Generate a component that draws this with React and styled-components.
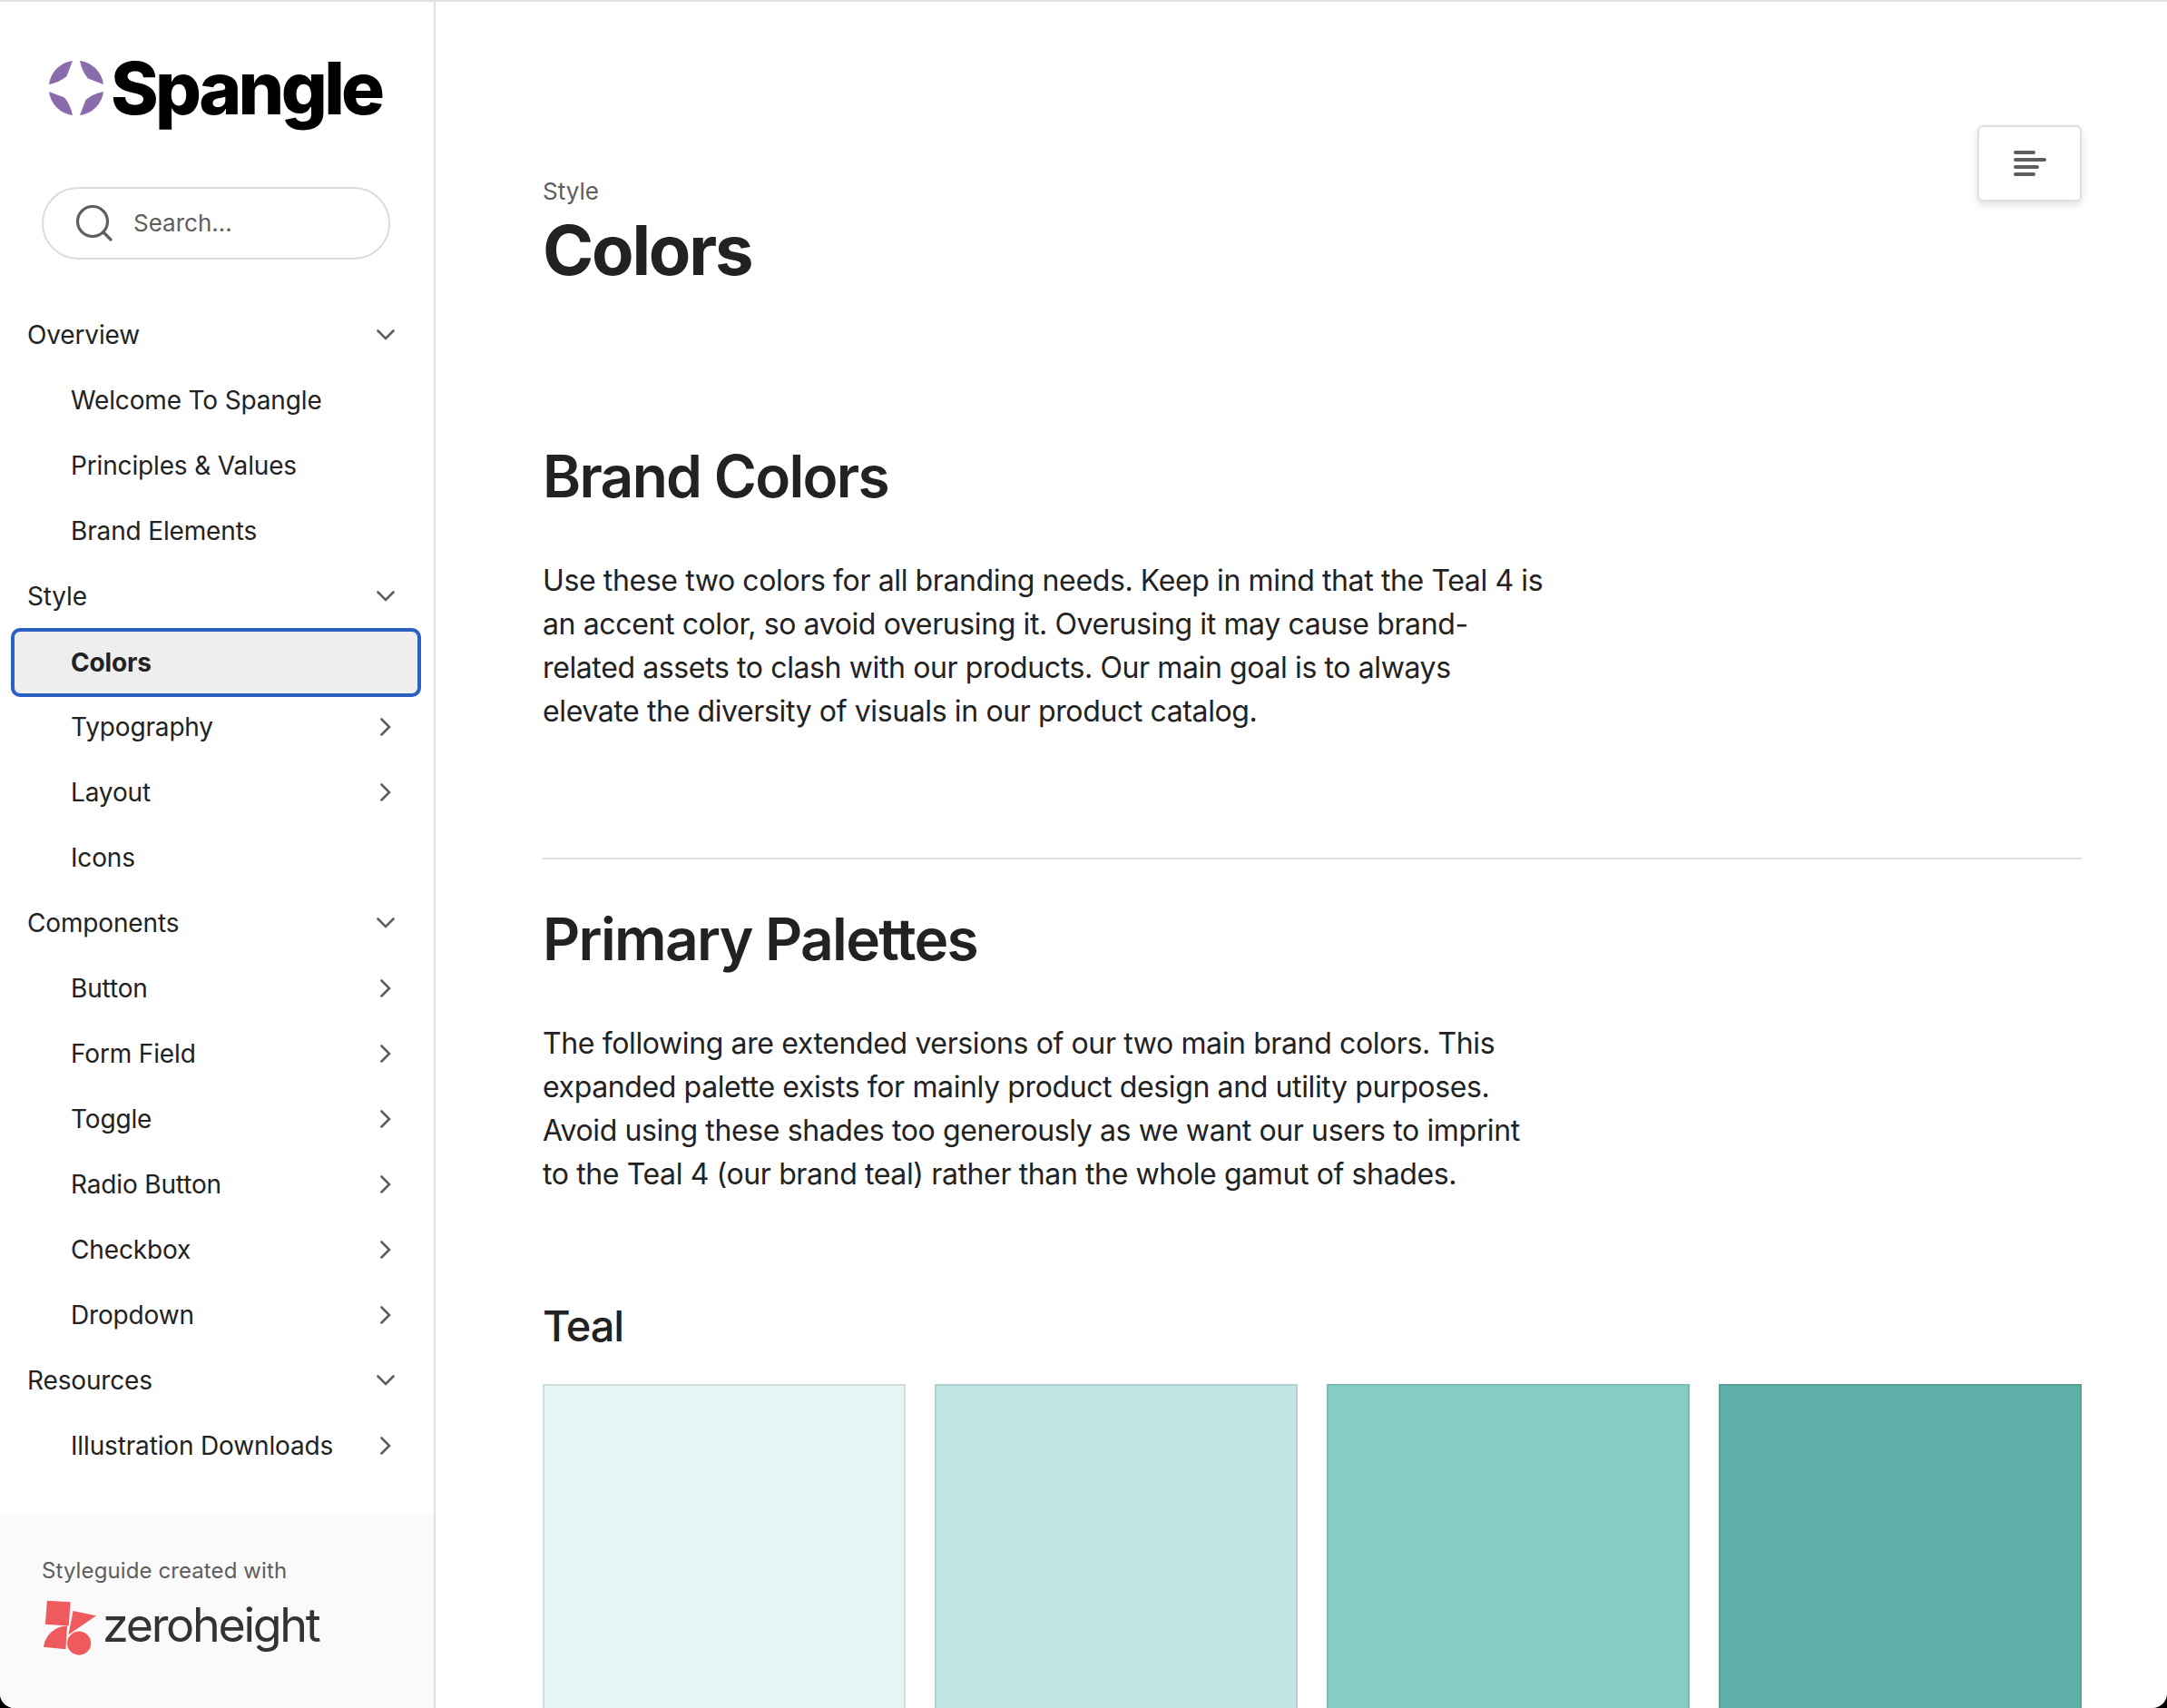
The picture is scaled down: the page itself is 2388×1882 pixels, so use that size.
import React from 'react';
import styled, { createGlobalStyle } from 'styled-components';

const Global = createGlobalStyle`
  html, body { margin: 0; padding: 0; background: #000; }
  body { font-family: Inter, "Liberation Sans", sans-serif; color: #222; overflow: hidden; }
  * { box-sizing: border-box; }
`;

const Page = styled.div`
  width: 2388px; height: 1882px; display: flex; overflow: hidden;
  background: #fff; border-top: 2px solid #e0e0e0; border-radius: 0 0 16px 16px;
`;
const Sidebar = styled.aside`
  width: 480px; flex: none; height: 100%; display: flex; flex-direction: column;
  border-right: 2px solid #e0e0e0;
`;
const Brand = styled.div`
  height: 204px; padding: 65px 0 0 54px; display: flex; align-items: flex-start; gap: 8px;
`;
const BrandName = styled.span`
  font-family: "Inter", sans-serif; font-weight: 800; font-size: 80px; line-height: 60px;
  letter-spacing: -3.7px; color: #000;
`;
const Search = styled.div`
  width: 384px; height: 80px; margin-left: 46px; border: 2px solid #dcdcdc; border-radius: 40px;
  display: flex; align-items: center; padding-left: 35px; gap: 22px;
  font-size: 26px; color: #5e5e5e;
`;
const SearchText = styled.span`
  margin-bottom: 2px;
`;
const Nav = styled.nav`
  margin-top: 47px; display: flex; flex-direction: column;
`;
const Row = styled.div`
  height: ${p => p.$active ? '68px' : '72px'}; flex: none; display: flex; align-items: center; justify-content: space-between;
  margin: ${p => p.$active ? '3px 18px 1px 16px' : '0 18px 0 16px'};
  padding: 0 ${p => p.$chev === 'down' ? '25px' : '29px'} 0 ${p => p.$sub ? '62px' : '14px'};
  font-size: 28px; letter-spacing: -0.15px; color: #222;
  font-weight: ${p => p.$active ? 700 : 400};
  background: ${p => p.$active ? '#eeeeee' : 'transparent'};
  border-radius: ${p => p.$active ? '6px' : '0'};
  outline: ${p => p.$active ? '4px solid #2a5fc4' : 'none'};
`;
const Footer = styled.div`
  margin-top: auto; height: 215px; background: #fafafa; padding: 48px 0 0 46px;
  display: flex; flex-direction: column;
`;
const FooterNote = styled.div`
  font-size: 24px; line-height: 32px; color: #5e5e5e; letter-spacing: 0.1px;
`;
const ZeroBrand = styled.div`
  display: flex; align-items: flex-start; margin: 15px 0 0 1px; gap: 6px;
`;
const ZeroName = styled.span`
  font-size: 52px; line-height: 58px; color: #333; letter-spacing: -2.3px; font-weight: 400;
`;
const Main = styled.main`
  position: relative; flex: 1; padding: 0 94px 0 118px; min-width: 0;
`;
const TocButton = styled.button`
  position: absolute; top: 136px; right: 94px; width: 115px; height: 84px;
  background: #fff; border: 2px solid #e0e0e0; border-radius: 6px; padding: 0;
  box-shadow: 0 4px 10px rgba(0,0,0,.12);
  display: flex; align-items: center; justify-content: center;
`;
const Crumb = styled.div`
  padding-top: 192px; font-size: 26px; line-height: 34px; color: #5e5e5e;
`;
const Title = styled.h1`
  margin: 0; font-size: 76px; line-height: 94px; font-weight: 700; letter-spacing: -2.2px; color: #222;
`;
const H2 = styled.h2`
  margin: ${p => p.$first ? '163px' : '0'} 0 0; font-size: 64px; line-height: 80px; font-weight: 600;
  letter-spacing: -1.7px; color: #222;
  ${p => !p.$first && 'padding-top: 48px;'}
`;
const Para = styled.p`
  margin: 51px 0 0; font-size: 32px; line-height: 48px; color: #222; letter-spacing: -0.38px;
`;
const Rule = styled.hr`
  margin: 137px 0 0; border: 0; height: 2px; background: #dedede;
`;
const H3 = styled.h3`
  margin: 113px 0 0; font-size: 47px; line-height: 60px; font-weight: 500; letter-spacing: -1.2px; color: #222;
`;
const Swatches = styled.div`
  margin-top: 34px; display: grid; grid-template-columns: repeat(4, 400px); gap: 32px;
`;
const Swatch = styled.div`
  height: 400px; background: ${p => p.$c}; border: 2px solid rgba(0,0,0,.09);
`;
const Icon = styled.svg`
  flex: none; display: block; fill: none; stroke: #5e5e5e; stroke-width: 2.6;
  stroke-linecap: round; stroke-linejoin: miter;
`;

function Chev({ dir }) {
  return dir === 'down'
    ? <Icon width="20" height="12" viewBox="0 0 20 12"><path d="M1.5 1.5 L10 10 L18.5 1.5" /></Icon>
    : <Icon width="12" height="20" viewBox="0 0 12 20"><path d="M1.5 1.5 L10 10 L1.5 18.5" /></Icon>;
}

function SpangleMark() {
  const petal = 'M4 -30 A30 30 0 0 1 30 -4 L13 -10.5 Q6.5 -18 4 -30 Z';
  return (
    <svg width="60" height="60" viewBox="-30 -30 60 60" style={{ flex: 'none', display: 'block' }}>
      {[0, 90, 180, 270].map(a => <path key={a} d={petal} fill="#8a6bac" transform={`rotate(${a})`} />)}
    </svg>
  );
}

function ZeroMark() {
  return (
    <svg width="60" height="64" viewBox="142 430 184 192" style={{ flex: 'none', display: 'block' }}>
      <g fill="#ef5a5f">
        <polygon points="157,433 236,438 230,518 151,513" />
        <polygon points="245,468 323,484 229,548" />
        <path d="M145 590 A82 82 0 0 1 225 518 L220 597 Z" />
        <circle cx="265" cy="577" r="40" />
      </g>
    </svg>
  );
}

const items = [
  ['Overview', 0, 'down'], ['Welcome To Spangle', 1], ['Principles & Values', 1], ['Brand Elements', 1],
  ['Style', 0, 'down'], ['Colors', 1, null, true], ['Typography', 1, 'right'], ['Layout', 1, 'right'], ['Icons', 1],
  ['Components', 0, 'down'], ['Button', 1, 'right'], ['Form Field', 1, 'right'], ['Toggle', 1, 'right'],
  ['Radio Button', 1, 'right'], ['Checkbox', 1, 'right'], ['Dropdown', 1, 'right'],
  ['Resources', 0, 'down'], ['Illustration Downloads', 1, 'right'],
];

export default function App() {
  return (
    <>
      <Global />
      <Page>
        <Sidebar>
          <Brand>
            <SpangleMark />
            <BrandName>Spangle</BrandName>
          </Brand>
          <Search>
            <Icon width="42" height="42" viewBox="0 0 42 42" style={{ strokeWidth: 3.2 }}>
              <circle cx="19" cy="19" r="16.5" />
              <path d="M31 31 L39 39" />
            </Icon>
            <SearchText>Search...</SearchText>
          </Search>
          <Nav>
            {items.map(([label, sub, chev, active]) => (
              <Row key={label} $sub={!!sub} $chev={chev} $active={active}>
                <span>{label}</span>
                {chev && <Chev dir={chev} />}
              </Row>
            ))}
          </Nav>
          <Footer>
            <FooterNote>Styleguide created with</FooterNote>
            <ZeroBrand>
              <ZeroMark />
              <ZeroName>zeroheight</ZeroName>
            </ZeroBrand>
          </Footer>
        </Sidebar>
        <Main>
          <TocButton aria-label="Contents">
            <svg width="36" height="28" viewBox="0 0 36 28" fill="#5e5e5e">
              <rect x="0" y="0" width="24" height="4" rx="2" />
              <rect x="0" y="8" width="36" height="4" rx="2" />
              <rect x="0" y="16" width="28" height="4" rx="2" />
              <rect x="0" y="24" width="24" height="4" rx="2" />
            </svg>
          </TocButton>
          <Crumb>Style</Crumb>
          <Title>Colors</Title>
          <H2 $first>Brand Colors</H2>
          <Para>
            Use these two colors for all branding needs. Keep in mind that the Teal 4 is<br />
            an accent color, so avoid overusing it. Overusing it may cause brand-<br />
            related assets to clash with our products. Our main goal is to always<br />
            elevate the diversity of visuals in our product catalog.
          </Para>
          <Rule />
          <H2>Primary Palettes</H2>
          <Para>
            The following are extended versions of our two main brand colors. This<br />
            expanded palette exists for mainly product design and utility purposes.<br />
            Avoid using these shades too generously as we want our users to imprint<br />
            to the Teal 4 (our brand teal) rather than the whole gamut of shades.
          </Para>
          <H3>Teal</H3>
          <Swatches>
            {['#e3f5f5', '#c2e6e3', '#88ccc8', '#60b0aa'].map(c => <Swatch key={c} $c={c} />)}
          </Swatches>
        </Main>
      </Page>
    </>
  );
}
